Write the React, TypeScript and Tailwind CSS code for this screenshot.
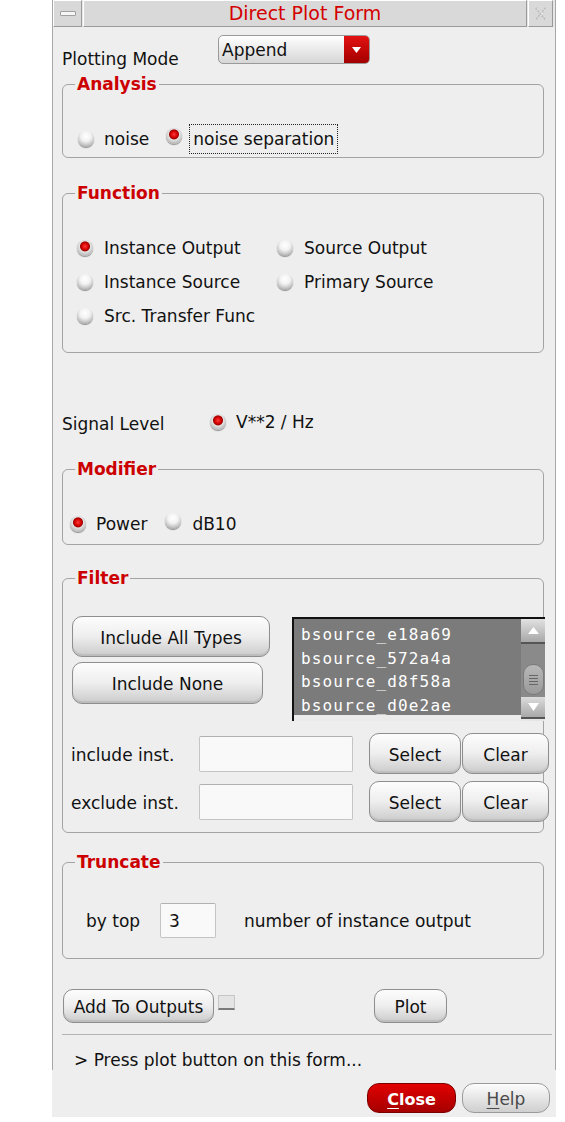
import type { ReactNode } from "react";

const RADIO_OFF =
  "bg-[radial-gradient(circle_at_50%_32%,#ffffff_0%,#f2f2f2_38%,#c0c0c0_70%,#5f5f5f_100%)]";
const RADIO_ON =
  "bg-[radial-gradient(circle_at_50%_40%,#ff3a3a_0%,#d40000_26%,#a00000_36%,#e4e4e4_44%,#bababa_72%,#5f5f5f_100%)]";

function Radio({ on }: { on?: boolean }) {
  return (
    <span
      className={
        "inline-block w-[16px] h-[16px] shrink-0 rounded-full shadow-[0_1px_1px_rgba(0,0,0,0.4)] " +
        (on ? RADIO_ON : RADIO_OFF)
      }
    />
  );
}

function Btn({ children, className = "" }: { children: ReactNode; className?: string }) {
  return (
    <button
      type="button"
      className={
        "flex shrink-0 items-center justify-center rounded-[10px] border border-[#8e8e8e] bg-linear-to-b from-[#fdfdfd] via-[#eeeeee] to-[#cbcbcb] pt-[4px] text-[17px] text-[#111] shadow-[inset_0_-2px_1px_rgba(0,0,0,0.08)] " +
        className
      }
    >
      {children}
    </button>
  );
}

function Group({ title, children, className = "" }: { title: string; children: ReactNode; className?: string }) {
  return (
    <fieldset className={"min-w-0 rounded-[6px] border border-[#a3a3a3] " + className}>
      <legend className="ml-[12px] px-[2px] text-[17px] leading-[18px] font-bold text-[#cc0000]">{title}</legend>
      {children}
    </fieldset>
  );
}

function Field({ className = "", value = "" }: { className?: string; value?: string }) {
  return (
    <div
      className={
        "flex shrink-0 items-center rounded-[2px] border border-[#c4c4c4] border-t-[#b0b0b0] bg-[#f9f9f9] pl-[8px] pt-[3px] text-[17px] " +
        className
      }
    >
      {value}
    </div>
  );
}

function Row({ on, label, className = "" }: { on?: boolean; label: string; className?: string }) {
  return (
    <div className={"flex items-center gap-[11px] " + className}>
      <Radio on={on} />
      <span className="pt-[2px]">{label}</span>
    </div>
  );
}

const items = ["bsource_e18a69", "bsource_572a4a", "bsource_d8f58a", "bsource_d0e2ae"];

export default function App() {
  return (
    <div className="min-h-[1122px] bg-white font-['DejaVu_Sans',sans-serif] text-[17px] text-[#111]">
      <div className="ml-[52px] w-[504px] bg-[#eeeeee]">
        <div className="border-l border-r border-[#a8a8a8]">
          {/* title bar */}
          <div className="flex h-[27px] bg-[#e6e6e6]">
            <div className="flex w-[29px] items-center justify-center border-t border-l border-t-white border-l-white border-r border-b border-r-[#9a9a9a] border-b-[#9a9a9a] bg-[#d8d8d8]">
              <span className="h-[5px] w-[16px] rounded-[1px] border border-[#a0a0a0] bg-[#f6f6f6]" />
            </div>
            <div className="ml-[1px] flex flex-1 items-center justify-center border-t border-l border-t-white border-l-white border-r border-b border-r-[#9a9a9a] border-b-[#9a9a9a] bg-[#d9d9d9] text-[19px] text-[#d40000]">
              Direct Plot Form
            </div>
            <div className="ml-[1px] flex w-[25px] items-center justify-center border-t border-l border-t-white border-l-white border-r border-b border-r-[#9a9a9a] border-b-[#9a9a9a] bg-[#d9d9d9]">
              <svg width="14" height="16" viewBox="0 0 14 16">
                <path d="M2 2 L12 14 M12 2 L2 14" stroke="#bcbcbc" strokeWidth="2.4" strokeDasharray="2 1.2" fill="none" />
                <path d="M3 2 L13 14 M13 2 L3 14" stroke="#f4f4f4" strokeWidth="0.8" strokeDasharray="2 1.2" fill="none" />
              </svg>
            </div>
            <div className="w-[2px]" />
          </div>

          <div className="pl-[9px] pr-[11px]">
            {/* plotting mode */}
            <div className="mt-[8px] flex h-[29px] items-start">
              <span className="mt-[14px] w-[156px] leading-[20px]">Plotting Mode</span>
              <div className="flex h-[29px] w-[152px] overflow-hidden rounded-[5px] border border-[#9a9a9a] bg-linear-to-b from-white to-[#d6d6d6]">
                <span className="flex flex-1 items-center pl-[3px] pt-[3px]">Append</span>
                <span className="flex w-[25px] items-center justify-center bg-linear-to-b from-[#e41212] to-[#a30000]">
                  <svg width="9" height="6" viewBox="0 0 9 6">
                    <polygon points="0,0 9,0 4.5,6" fill="#ffffff" />
                  </svg>
                </span>
              </div>
            </div>

            <Group title="Analysis" className="mt-[11px] pt-[31px] pb-[3px]">
              <div className="flex h-[30px] items-center pl-[15px]">
                <Radio />
                <span className="ml-[10px] pt-[2px]">noise</span>
                <span className="ml-[17px]">
                  <Radio on />
                </span>
                <span className="ml-[7px] flex h-[30px] items-center border border-dotted border-[#222] px-[3px] pt-[2px]">
                  noise separation
                </span>
              </div>
            </Group>

            <Group title="Function" className="mt-[26px] pt-[29px] pb-[19px]">
              <div className="grid grid-cols-[200px_1fr] pl-[14px]">
                <Row on label="Instance Output" className="h-[34px]" />
                <Row label="Source Output" className="h-[34px]" />
                <Row label="Instance Source" className="h-[34px]" />
                <Row label="Primary Source" className="h-[34px]" />
                <Row label="Src. Transfer Func" className="h-[34px]" />
              </div>
            </Group>

            <div className="mt-[59px] flex h-[20px] items-center">
              <span className="mt-[6px] w-[148px]">Signal Level</span>
              <Radio on />
              <span className="ml-[10px] pt-[2px]">V**2 / Hz</span>
            </div>

            <Group title="Modifier" className="mt-[28px] pt-[36px] pb-[10px]">
              <div className="flex h-[20px] items-center pl-[7px]">
                <Radio on />
                <span className="ml-[10px] pt-[2px]">Power</span>
                <span className="ml-[18px]">
                  <Radio />
                </span>
                <span className="ml-[11px] pt-[2px]">dB10</span>
              </div>
            </Group>

            <Group title="Filter" className="mt-[24px] pt-[28px] pb-[10px]">
              <div className="flex h-[106px] items-start pl-[9px]">
                <div className="flex w-[198px] shrink-0 flex-col pt-[1px]">
                  <Btn className="h-[41px] w-[198px]">Include All Types</Btn>
                  <Btn className="mt-[5px] h-[42px] w-[191px]">Include None</Btn>
                </div>
                <div className="ml-[22px] mt-[2px] flex h-[104px] w-[253px] shrink-0 border-t-2 border-l-2 border-[#111]">
                  <div className="flex flex-1 flex-col">
                    <div className="h-[96px] overflow-hidden bg-[#7b7b7b] pl-[7px] pt-[4px] font-['DejaVu_Sans_Mono',monospace] text-[16px] leading-[23.6px] tracking-[1.15px] text-white">
                      {items.map((it) => (
                        <div key={it}>{it}</div>
                      ))}
                    </div>
                    <div className="flex-1 bg-[#ebebeb]" />
                  </div>
                  <div className="flex w-[24px] flex-col bg-[#8a8a8a]">
                    <div className="flex h-[25px] items-center justify-center border-b-2 border-[#555] bg-linear-to-b from-[#e2e2e2] to-[#a8a8a8]">
                      <svg width="11" height="7" viewBox="0 0 11 7">
                        <polygon points="5.5,0 11,7 0,7" fill="#ffffff" />
                      </svg>
                    </div>
                    <div className="h-[20px]" />
                    <div className="mx-auto flex h-[31px] w-[21px] flex-col items-center justify-center gap-[2px] rounded-[10px] border border-[#7a7a7a] bg-linear-to-b from-[#b8b8b8] to-[#9a9a9a]">
                      <span className="h-[1px] w-[9px] bg-[#666]" />
                      <span className="h-[1px] w-[9px] bg-[#666]" />
                      <span className="h-[1px] w-[9px] bg-[#666]" />
                      <span className="h-[1px] w-[9px] bg-[#666]" />
                    </div>
                    <div className="h-[2px]" />
                    <div className="flex h-[22px] items-center justify-center border-b-2 border-[#555] bg-linear-to-b from-[#dcdcdc] to-[#a8a8a8]">
                      <svg width="11" height="8" viewBox="0 0 11 8">
                        <polygon points="0,0 11,0 5.5,8" fill="#ffffff" />
                      </svg>
                    </div>
                    <div className="flex-1 bg-[#e6e6e6]" />
                  </div>
                </div>
              </div>

              <div className="mt-[12px] flex h-[41px] items-center pl-[8px]">
                <span className="w-[128px] shrink-0 pt-[5px]">include inst.</span>
                <Field className="h-[36px] w-[154px]" />
                <Btn className="ml-[16px] h-[41px] w-[92px]">Select</Btn>
                <Btn className="ml-[1px] h-[41px] w-[87px]">Clear</Btn>
              </div>
              <div className="mt-[7px] flex h-[41px] items-center pl-[8px]">
                <span className="w-[128px] shrink-0 pt-[5px]">exclude inst.</span>
                <Field className="h-[36px] w-[154px]" />
                <Btn className="ml-[16px] h-[41px] w-[92px]">Select</Btn>
                <Btn className="ml-[1px] h-[41px] w-[87px]">Clear</Btn>
              </div>
            </Group>

            <Group title="Truncate" className="mt-[20px] pt-[32px] pb-[20px]">
              <div className="flex h-[35px] items-center pl-[23px]">
                <span className="w-[74px] shrink-0 pt-[3px]">by top</span>
                <Field className="h-[35px] w-[56px]" value="3" />
                <span className="ml-[28px] pt-[2px]">number of instance output</span>
              </div>
            </Group>

            <div className="mt-[30px] flex h-[34px] items-start">
              <Btn className="ml-px h-[34px] w-[151px]">Add To Outputs</Btn>
              <span className="ml-[4px] mt-[6px] h-[15px] w-[17px] shrink-0 border border-[#c6c6c6] border-b-2 border-b-[#7a7a7a] bg-[#e4e4e4]" />
              <Btn className="ml-[139px] h-[34px] w-[73px]">Plot</Btn>
            </div>

            <div className="-mr-[8px] mt-[11px] h-px bg-[#b4b4b4]" />

            <div className="mt-[15px] pl-[12px] leading-[20px]">&gt; Press plot button on this form...</div>
          </div>
        </div>

        <div className="flex justify-end gap-[6px] pt-[13px] pb-[4px] pr-[6px]">
          <button
            type="button"
            className="flex h-[30px] w-[89px] items-center justify-center rounded-[12px] border border-[#7a0000] bg-linear-to-b from-[#e20000] to-[#a60000] pt-[3px] text-[16px] font-bold text-white"
          >
            <span className="underline underline-offset-[3px]">C</span>lose
          </button>
          <button
            type="button"
            className="flex h-[30px] w-[88px] items-center justify-center rounded-[12px] border border-[#9a9a9a] bg-linear-to-b from-[#fdfdfd] to-[#cfcfcf] pt-[3px] text-[17px] text-[#4a4a4a]"
          >
            <span className="underline underline-offset-[3px]">H</span>elp
          </button>
        </div>
      </div>
    </div>
  );
}
